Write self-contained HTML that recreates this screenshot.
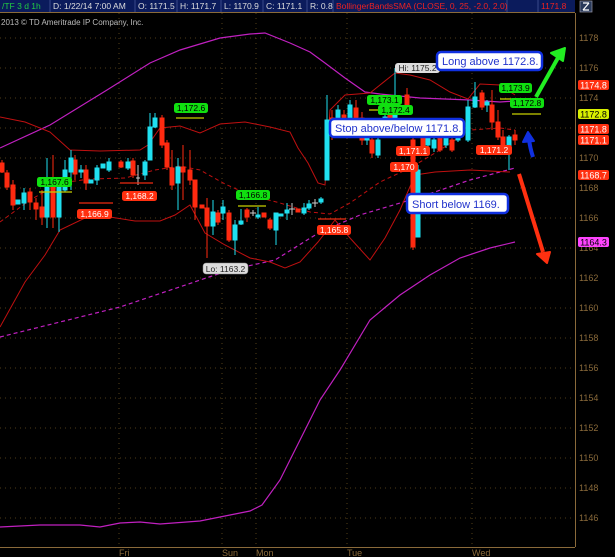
<!DOCTYPE html>
<html><head><meta charset="utf-8"><style>
html,body{margin:0;padding:0;background:#000;}
body{width:615px;height:557px;overflow:hidden;position:relative;font-family:"Liberation Sans",sans-serif;}
svg{position:absolute;left:0;top:0;}
</style></head><body>
<svg width="615" height="557" viewBox="0 0 615 557" xmlns="http://www.w3.org/2000/svg" font-family="Liberation Sans, sans-serif">
<rect width="615" height="557" fill="#000"/>
<!-- header -->
<rect x="0" y="0" width="575" height="12" fill="#0b1b5c"/>
<g stroke="#3a4a8a" stroke-width="1">
<line x1="50" y1="0" x2="50" y2="12"/><line x1="135" y1="0" x2="135" y2="12"/><line x1="177" y1="0" x2="177" y2="12"/><line x1="221" y1="0" x2="221" y2="12"/><line x1="263" y1="0" x2="263" y2="12"/><line x1="307" y1="0" x2="307" y2="12"/><line x1="333" y1="0" x2="333" y2="12"/><line x1="507" y1="0" x2="507" y2="12"/><line x1="538" y1="0" x2="538" y2="12"/>
</g>
<line x1="0" y1="12.5" x2="575" y2="12.5" stroke="#8a6a3a"/>
<g font-size="8.5" fill="#ddd">
<text x="2" y="9" fill="#22cc44">/TF 3 d 1h</text>
<text x="53" y="9">D: 1/22/14 7:00 AM</text>
<text x="138" y="9">O: 1171.5</text>
<text x="180" y="9">H: 1171.7</text>
<text x="224" y="9">L: 1170.9</text>
<text x="266" y="9">C: 1171.1</text>
<text x="310" y="9">R: 0.8</text>
<text x="336" y="9" fill="#ee2222">BollingerBandsSMA (CLOSE, 0, 25, -2.0, 2.0)</text>
<text x="541" y="9" fill="#ee2222">1171.8</text>
</g>
<rect x="580" y="1" width="12" height="11" fill="#2a3a5a" stroke="#99a" stroke-width="0.7"/>
<path d="M583 10 L589 3 M583 3 H589 M583 10 H589" stroke="#fff" stroke-width="1.2" fill="none"/>
<text x="1" y="25" font-size="8" fill="#bbb">2013 © TD Ameritrade IP Company, Inc.</text>
<!-- grid -->
<g stroke="#6a5020" stroke-width="0.8" stroke-dasharray="1,4">
<line x1="0" y1="38" x2="575" y2="38"/><line x1="0" y1="68" x2="575" y2="68"/><line x1="0" y1="98" x2="575" y2="98"/><line x1="0" y1="128" x2="575" y2="128"/><line x1="0" y1="158" x2="575" y2="158"/><line x1="0" y1="188" x2="575" y2="188"/><line x1="0" y1="218" x2="575" y2="218"/><line x1="0" y1="248" x2="575" y2="248"/><line x1="0" y1="278" x2="575" y2="278"/><line x1="0" y1="308" x2="575" y2="308"/><line x1="0" y1="338" x2="575" y2="338"/><line x1="0" y1="368" x2="575" y2="368"/><line x1="0" y1="398" x2="575" y2="398"/><line x1="0" y1="428" x2="575" y2="428"/><line x1="0" y1="458" x2="575" y2="458"/><line x1="0" y1="488" x2="575" y2="488"/><line x1="0" y1="518" x2="575" y2="518"/>
<line x1="119" y1="13" x2="119" y2="547"/><line x1="222" y1="13" x2="222" y2="547"/><line x1="256" y1="13" x2="256" y2="547"/><line x1="347" y1="13" x2="347" y2="547"/><line x1="472" y1="13" x2="472" y2="547"/>
</g>
<!-- axes -->
<line x1="575.5" y1="13" x2="575.5" y2="547" stroke="#8a6a3a"/>
<line x1="0" y1="547.5" x2="575" y2="547.5" stroke="#8a6a3a"/>
<g font-size="9" fill="#8a6a3a">
<text x="579" y="41">1178</text><text x="579" y="71">1176</text><text x="579" y="101">1174</text><text x="579" y="161">1170</text><text x="579" y="191">1168</text><text x="579" y="221">1166</text><text x="579" y="251">1164</text><text x="579" y="281">1162</text><text x="579" y="311">1160</text><text x="579" y="341">1158</text><text x="579" y="371">1156</text><text x="579" y="401">1154</text><text x="579" y="431">1152</text><text x="579" y="461">1150</text><text x="579" y="491">1148</text><text x="579" y="521">1146</text>
<text x="119" y="556">Fri</text><text x="222" y="556">Sun</text><text x="256" y="556">Mon</text><text x="347" y="556">Tue</text><text x="472" y="556">Wed</text>
</g>
<!-- bands -->
<polyline fill="none" stroke="#c020c0" stroke-width="1.2" points="0,148 50,125 107,90 150,63 180,50 220,38 250,34 265,33 290,43 310,52 325,63 345,78 365,92 380,94 420,98 470,100 500,102 515,101"/>
<polyline fill="none" stroke="#c020c0" stroke-width="1.2" points="0,527 40,525 80,525 100,527 120,523 140,522 160,524 200,521 220,517 250,511 262,505 280,480 300,440 320,400 340,370 370,320 400,295 430,275 460,258 490,248 515,242"/>
<polyline fill="none" stroke="#c020c0" stroke-width="1.2" stroke-dasharray="4,3" points="0,337 120,307 230,270 275,260 320,232 360,215 420,197 470,180 515,168"/>
<polyline fill="none" stroke="#c01010" stroke-width="1" points="0,117 25,122 50,132 70,150 100,151 140,150 148,145 160,128 180,126 200,133 220,124 245,122 270,127 290,132 298,148 308,163 318,183 325,185 330,110 345,95 370,93 395,73 410,75 430,80 450,92 468,99 480,84 500,85 515,95"/>
<polyline fill="none" stroke="#c01010" stroke-width="1" points="0,327 25,282 45,255 60,230 85,218 110,217 135,221 160,221 175,215 190,205 205,233 225,245 250,258 270,262 285,268 300,262 318,242 335,220 350,238 370,260 385,238 400,210 415,175 435,172 470,170 510,172"/>
<polyline fill="none" stroke="#c01010" stroke-width="1" stroke-dasharray="4,3" points="0,222 30,200 60,183 90,179 125,178 155,170 180,166 200,170 225,184 250,195 280,203 310,212 330,214 350,203 380,182 410,168 440,150 470,130 500,128 515,130"/>
<!-- candles -->
<g stroke-width="1">
<g stroke="#ff2a10" fill="#ff2a10">
<line x1="2" y1="160" x2="2" y2="173"/><rect x="0" y="163" width="4" height="9"/>
<line x1="7" y1="170" x2="7" y2="190"/><rect x="5" y="173" width="4" height="14"/>
<line x1="13" y1="180" x2="13" y2="210"/><rect x="11" y="185" width="4" height="20"/>
<line x1="30" y1="188" x2="30" y2="210"/><rect x="28" y="192" width="4" height="10"/>
<line x1="36" y1="198" x2="36" y2="220"/><rect x="34" y="203" width="4" height="6"/>
<line x1="42" y1="190" x2="42" y2="225"/><rect x="40" y="207" width="4" height="10"/>
<line x1="53" y1="155" x2="53" y2="228"/><rect x="51" y="187" width="4" height="30"/>
<line x1="75" y1="155" x2="75" y2="180"/><rect x="73" y="160" width="4" height="14"/>
<line x1="86" y1="165" x2="86" y2="190"/><rect x="84" y="170" width="4" height="13"/>
<line x1="121" y1="160" x2="121" y2="168"/><rect x="119" y="162" width="4" height="5"/>
<line x1="133" y1="158" x2="133" y2="178"/><rect x="131" y="161" width="4" height="14"/>
<line x1="162" y1="115" x2="162" y2="148"/><rect x="160" y="118" width="4" height="27"/>
<line x1="167" y1="140" x2="167" y2="170"/><rect x="165" y="143" width="4" height="24"/>
<line x1="172" y1="150" x2="172" y2="190"/><rect x="170" y="168" width="4" height="17"/>
<line x1="183" y1="145" x2="183" y2="200"/><rect x="181" y="167" width="4" height="5"/>
<line x1="190" y1="150" x2="190" y2="185"/><rect x="188" y="170" width="4" height="10"/>
<line x1="195" y1="180" x2="195" y2="220"/><rect x="193" y="180" width="4" height="27"/>
<rect x="200" y="205" width="4" height="3"/>
<line x1="207" y1="198" x2="207" y2="258"/><rect x="205" y="208" width="4" height="18"/>
<line x1="218" y1="210" x2="218" y2="225"/><rect x="216" y="213" width="4" height="9"/>
<line x1="229" y1="210" x2="229" y2="242"/><rect x="227" y="213" width="4" height="27"/>
<line x1="247" y1="208" x2="247" y2="222"/><rect x="245" y="210" width="4" height="7"/>
<rect x="262" y="213" width="4" height="4"/>
<line x1="270" y1="218" x2="270" y2="230"/><rect x="268" y="220" width="4" height="8"/>
<rect x="296" y="209" width="4" height="3"/>
<line x1="332" y1="110" x2="332" y2="140"/><rect x="330" y="118" width="4" height="12"/>
<line x1="344" y1="110" x2="344" y2="132"/><rect x="342" y="115" width="4" height="13"/>
<line x1="356" y1="100" x2="356" y2="125"/><rect x="354" y="108" width="4" height="14"/>
<line x1="362" y1="112" x2="362" y2="145"/><rect x="360" y="118" width="4" height="22"/>
<line x1="372" y1="130" x2="372" y2="158"/><rect x="370" y="140" width="4" height="13"/>
<line x1="390" y1="110" x2="390" y2="125"/><rect x="388" y="115" width="4" height="7"/>
<line x1="407" y1="88" x2="407" y2="112"/><rect x="405" y="95" width="4" height="12"/>
<line x1="413" y1="135" x2="413" y2="250"/><rect x="411" y="140" width="4" height="107"/>
<line x1="423" y1="130" x2="423" y2="152"/><rect x="421" y="135" width="4" height="15"/>
<line x1="440" y1="133" x2="440" y2="152"/><rect x="438" y="138" width="4" height="12"/>
<line x1="452" y1="135" x2="452" y2="152"/><rect x="450" y="140" width="4" height="10"/>
<line x1="482" y1="90" x2="482" y2="110"/><rect x="480" y="93" width="4" height="14"/>
<line x1="492" y1="90" x2="492" y2="130"/><rect x="490" y="105" width="4" height="17"/>
<line x1="498" y1="110" x2="498" y2="140"/><rect x="496" y="122" width="4" height="15"/>
<line x1="503" y1="130" x2="503" y2="150"/><rect x="501" y="137" width="4" height="10"/>
<line x1="515" y1="130" x2="515" y2="145"/><rect x="513" y="135" width="4" height="5"/>
</g>
<g stroke="#20e0f0" fill="#20e0f0">
<rect x="16" y="200" width="4" height="4"/>
<line x1="24" y1="188" x2="24" y2="210"/><rect x="22" y="193" width="4" height="10"/>
<line x1="47" y1="158" x2="47" y2="228"/><rect x="45" y="187" width="4" height="30"/>
<line x1="59" y1="185" x2="59" y2="232"/><rect x="57" y="187" width="4" height="30"/>
<line x1="65" y1="160" x2="65" y2="192"/><rect x="63" y="170" width="4" height="20"/>
<line x1="71" y1="150" x2="71" y2="190"/><rect x="69" y="158" width="4" height="14"/>
<line x1="81" y1="165" x2="81" y2="178"/><rect x="79" y="170" width="4" height="2"/>
<rect x="89" y="180" width="4" height="3"/>
<line x1="97" y1="165" x2="97" y2="185"/><rect x="95" y="168" width="4" height="12"/>
<rect x="101" y="164" width="4" height="4"/>
<line x1="109" y1="158" x2="109" y2="172"/><rect x="107" y="162" width="4" height="8"/>
<line x1="128" y1="158" x2="128" y2="170"/><rect x="126" y="162" width="4" height="6"/>
<line x1="145" y1="160" x2="145" y2="180"/><rect x="143" y="162" width="4" height="13"/>
<line x1="150" y1="113" x2="150" y2="160"/><rect x="148" y="127" width="4" height="33"/>
<line x1="155" y1="113" x2="155" y2="128"/><rect x="153" y="118" width="4" height="9"/>
<line x1="178" y1="158" x2="178" y2="210"/><rect x="176" y="167" width="4" height="16"/>
<line x1="213" y1="200" x2="213" y2="235"/><rect x="211" y="212" width="4" height="14"/>
<line x1="223" y1="200" x2="223" y2="220"/><rect x="221" y="207" width="4" height="6"/>
<line x1="235" y1="220" x2="235" y2="255"/><rect x="233" y="225" width="4" height="15"/>
<line x1="241" y1="209" x2="241" y2="225"/><rect x="239" y="221" width="4" height="3"/>
<line x1="258" y1="207" x2="258" y2="219"/><rect x="256" y="215" width="4" height="2"/>
<line x1="276" y1="213" x2="276" y2="245"/><rect x="274" y="213" width="4" height="17"/>
<rect x="279" y="214" width="4" height="2"/>
<line x1="287" y1="203" x2="287" y2="220"/><rect x="285" y="210" width="4" height="3"/>
<line x1="304" y1="203" x2="304" y2="215"/><rect x="302" y="208" width="4" height="5"/>
<line x1="309" y1="200" x2="309" y2="210"/><rect x="307" y="204" width="4" height="4"/>
<line x1="321" y1="197" x2="321" y2="204"/><rect x="319" y="199" width="4" height="3"/>
<line x1="327" y1="95" x2="327" y2="180"/><rect x="325" y="120" width="4" height="60"/>
<line x1="338" y1="105" x2="338" y2="130"/><rect x="336" y="110" width="4" height="15"/>
<line x1="350" y1="100" x2="350" y2="122"/><rect x="348" y="105" width="4" height="13"/>
<line x1="367" y1="120" x2="367" y2="145"/><rect x="365" y="125" width="4" height="15"/>
<line x1="378" y1="135" x2="378" y2="158"/><rect x="376" y="140" width="4" height="15"/>
<line x1="385" y1="110" x2="385" y2="128"/><rect x="383" y="117" width="4" height="8"/>
<line x1="395" y1="68" x2="395" y2="125"/><rect x="393" y="112" width="4" height="8"/>
<line x1="418" y1="165" x2="418" y2="237"/><rect x="416" y="170" width="4" height="67"/>
<line x1="428" y1="125" x2="428" y2="150"/><rect x="426" y="130" width="4" height="15"/>
<line x1="434" y1="135" x2="434" y2="152"/><rect x="432" y="140" width="4" height="8"/>
<line x1="446" y1="130" x2="446" y2="148"/><rect x="444" y="135" width="4" height="10"/>
<line x1="458" y1="125" x2="458" y2="142"/><rect x="456" y="130" width="4" height="10"/>
<line x1="468" y1="100" x2="468" y2="142"/><rect x="466" y="107" width="4" height="33"/>
<line x1="475" y1="82" x2="475" y2="108"/><rect x="473" y="97" width="4" height="10"/>
<line x1="487" y1="100" x2="487" y2="112"/><rect x="485" y="102" width="4" height="3"/>
<line x1="509" y1="135" x2="509" y2="170"/><rect x="507" y="137" width="4" height="10"/>
</g>
<g stroke="#ccc"><line x1="138" y1="165" x2="138" y2="185"/><line x1="136" y1="178" x2="140" y2="178"/><line x1="253" y1="210" x2="253" y2="216"/><line x1="250" y1="213" x2="256" y2="213"/><line x1="292" y1="203" x2="292" y2="215"/><line x1="289" y1="209" x2="295" y2="209"/><line x1="315" y1="199" x2="315" y2="207"/><line x1="312" y1="203" x2="318" y2="203"/></g>
</g>
<!-- level lines -->
<g stroke-width="1.3">
<line x1="39" y1="192" x2="72" y2="192" stroke="#c8d000"/>
<line x1="79" y1="203" x2="113" y2="203" stroke="#ee2a10"/>
<line x1="120" y1="183" x2="153" y2="183" stroke="#ee2a10"/>
<line x1="176" y1="118" x2="204" y2="118" stroke="#c8d000"/>
<line x1="238" y1="206" x2="266" y2="206" stroke="#c8d000"/>
<line x1="318" y1="219" x2="346" y2="219" stroke="#ee2a10"/>
<line x1="512" y1="114" x2="541" y2="114" stroke="#c8d000"/>
<line x1="500" y1="99" x2="515" y2="99" stroke="#c8d000"/>
<line x1="369" y1="110" x2="380" y2="110" stroke="#c8d000"/>
</g>
<!-- labels -->
<g font-size="8.5" text-anchor="middle">
<rect x="37" y="177" width="35" height="10" rx="2.5" fill="#10e010"/><text x="54.5" y="185" fill="#000">1,167.6</text>
<rect x="77" y="209" width="35" height="10" rx="2.5" fill="#ff3010"/><text x="94.5" y="217" fill="#fff">1,166.9</text>
<rect x="122" y="191" width="35" height="10" rx="2.5" fill="#ff3010"/><text x="139.5" y="199" fill="#fff">1,168.2</text>
<rect x="174" y="103" width="34" height="10" rx="2.5" fill="#10e010"/><text x="191" y="111" fill="#000">1,172.6</text>
<rect x="236" y="190" width="34" height="10" rx="2.5" fill="#10e010"/><text x="253" y="198" fill="#000">1,166.8</text>
<rect x="203" y="263" width="45" height="11" rx="3" fill="#ddd" stroke="#888" stroke-width="0.5"/><text x="225.5" y="272" fill="#222">Lo: 1163.2</text>
<rect x="317" y="225" width="34" height="10" rx="2.5" fill="#ff3010"/><text x="334" y="233" fill="#fff">1,165.8</text>
<rect x="395" y="63" width="45" height="10" rx="3" fill="#ddd"/><text x="417.5" y="71" fill="#222">Hi: 1175.2</text>
<rect x="367" y="95" width="35" height="10" rx="2.5" fill="#10e010"/><text x="384.5" y="103" fill="#000">1,173.1</text>
<rect x="378" y="105" width="35" height="10" rx="2.5" fill="#10e010"/><text x="395.5" y="113" fill="#000">1,172.4</text>
<rect x="396" y="146" width="34" height="10" rx="2.5" fill="#ff3010"/><text x="413" y="154" fill="#fff">1,171.1</text>
<rect x="390" y="162" width="28" height="10" rx="2.5" fill="#ff3010"/><text x="404" y="170" fill="#fff">1,170</text>
<rect x="499" y="83" width="33" height="10" rx="2.5" fill="#10e010"/><text x="515.5" y="91" fill="#000">1,173.9</text>
<rect x="510" y="98" width="34" height="10" rx="2.5" fill="#10e010"/><text x="527" y="106" fill="#000">1,172.8</text>
<rect x="476" y="145" width="36" height="10" rx="2.5" fill="#ff3010"/><text x="494" y="153" fill="#fff">1,171.2</text>
</g>
<g font-size="9" text-anchor="middle">
<rect x="578" y="80" width="31" height="10" rx="2" fill="#ff3010"/><text x="593.5" y="88.5" fill="#fff">1174.8</text>
<rect x="578" y="109" width="31" height="10" rx="2" fill="#d8f000"/><text x="593.5" y="117.5" fill="#000">1172.8</text>
<rect x="578" y="124" width="31" height="10" rx="2" fill="#ff3010"/><text x="593.5" y="132.5" fill="#fff">1171.8</text>
<rect x="578" y="135" width="31" height="10" rx="2" fill="#ff3010"/><text x="593.5" y="143.5" fill="#fff">1171.1</text>
<rect x="578" y="170" width="31" height="10" rx="2" fill="#ff3010"/><text x="593.5" y="178.5" fill="#fff">1168.7</text>
<rect x="578" y="237" width="31" height="10" rx="2" fill="#ff44ff"/><text x="593.5" y="245.5" fill="#000">1164.3</text>
</g>
<!-- callouts -->
<g font-size="11" fill="#2233cc">
<rect x="437" y="52" width="105" height="18" rx="4" fill="#fff" stroke="#1030e0" stroke-width="2.5"/><text x="442" y="65">Long above 1172.8.</text>
<rect x="330" y="119" width="134" height="18" rx="4" fill="#fff" stroke="#1030e0" stroke-width="2.5"/><text x="335" y="132">Stop above/below 1171.8.</text>
<rect x="407" y="194" width="101" height="19" rx="4" fill="#fff" stroke="#1030e0" stroke-width="2.5"/><text x="412" y="208">Short below 1169.</text>
</g>
<!-- arrows -->
<line x1="536" y1="97" x2="559" y2="56" stroke="#22ee22" stroke-width="4"/>
<path d="M565 48 L551 53 L563 61 Z" fill="#22ee22" stroke="#22ee22" stroke-width="2" stroke-linejoin="round"/>
<path d="M533 157 Q530 148 529 139" stroke="#1030e0" stroke-width="4" fill="none"/>
<path d="M528 132 L523 142 L534 141 Z" fill="#1030e0" stroke="#1030e0" stroke-width="2" stroke-linejoin="round"/>
<line x1="519" y1="174" x2="543" y2="252" stroke="#ff3010" stroke-width="4"/>
<path d="M547 263 L537 254 L550 252 Z" fill="#ff3010" stroke="#ff3010" stroke-width="2" stroke-linejoin="round"/>
</svg>
</body></html>
